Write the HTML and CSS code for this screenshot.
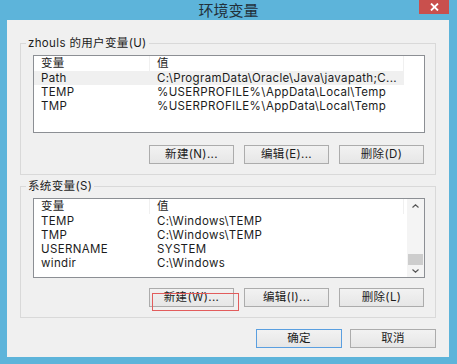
FILE: index.html
```html
<!DOCTYPE html>
<html lang="zh-CN">
<head>
<meta charset="utf-8">
<title>环境变量</title>
<link rel="stylesheet" href="styles.css">
</head>
<body>
<div class="window">
  <div class="titlebar">
    <div class="title">环境变量</div>
    <div class="close">
      <svg width="9" height="8" viewBox="0 0 9 8"><path d="M1 0.5 L8 7.5 M8 0.5 L1 7.5" stroke="#fff" stroke-width="1.8" fill="none"/></svg>
    </div>
  </div>
  <div class="client">
    <fieldset class="group">
      <legend>zhouls 的用户变量(U)</legend>
      <div class="list list-user">
        <div class="table">
          <div class="row head"><span class="c1">变量</span><span class="c2">值</span></div>
          <div class="row sel"><span class="c1">Path</span><span class="c2">C:\ProgramData\Oracle\Java\javapath;C...</span></div>
          <div class="row"><span class="c1">TEMP</span><span class="c2">%USERPROFILE%\AppData\Local\Temp</span></div>
          <div class="row"><span class="c1">TMP</span><span class="c2">%USERPROFILE%\AppData\Local\Temp</span></div>
        </div>
      </div>
      <div class="btns">
        <button class="btn">新建(N)...</button>
        <button class="btn">编辑(E)...</button>
        <button class="btn">删除(D)</button>
      </div>
    </fieldset>
    <fieldset class="group group-sys">
      <legend>系统变量(S)</legend>
      <div class="list list-sys">
        <div class="table">
          <div class="row head"><span class="c1">变量</span><span class="c2">值</span></div>
          <div class="row"><span class="c1">TEMP</span><span class="c2">C:\Windows\TEMP</span></div>
          <div class="row"><span class="c1">TMP</span><span class="c2">C:\Windows\TEMP</span></div>
          <div class="row"><span class="c1">USERNAME</span><span class="c2">SYSTEM</span></div>
          <div class="row"><span class="c1">windir</span><span class="c2">C:\Windows</span></div>
        </div>
        <div class="scrollbar">
          <div class="sb-btn sb-up">
            <svg width="7" height="4" viewBox="0 0 7 4"><path d="M0.5 3.5 L3.5 0.8 L6.5 3.5" stroke="#555" stroke-width="1.2" fill="none"/></svg>
          </div>
          <div class="sb-track"><div class="sb-thumb"></div></div>
          <div class="sb-btn sb-down">
            <svg width="7" height="4" viewBox="0 0 7 4"><path d="M0.5 0.5 L3.5 3.2 L6.5 0.5" stroke="#555" stroke-width="1.2" fill="none"/></svg>
          </div>
        </div>
      </div>
      <div class="btns">
        <button class="btn btn-marked">新建(W)...<span class="mark"></span></button>
        <button class="btn">编辑(I)...</button>
        <button class="btn">删除(L)</button>
      </div>
    </fieldset>
    <div class="dlg-btns">
      <button class="btn btn-default">确定</button>
      <button class="btn">取消</button>
    </div>
  </div>
</div>
</body>
</html>
```

FILE: styles.css
```css
html, body {
  margin: 0;
  padding: 0;
  background: #ffffff;
}

body {
  font-family: Inter, "Noto Sans CJK SC", sans-serif;
  font-size: 11.5px;
  letter-spacing: 0.35px;
  color: #1c1c1c;
}

.window {
  width: 457px;
  height: 364px;
  box-sizing: border-box;
  background: #5db4da;
  display: flex;
  flex-direction: column;
  padding-bottom: 7px;
}

.titlebar {
  height: 20px;
  flex: none;
  display: grid;
  grid-template-columns: 1fr auto 1fr;
}

.title {
  grid-column: 2;
  font-size: 15px;
  line-height: 20px;
  letter-spacing: 0;
  color: #22303a;
  font-family: "Noto Sans CJK SC", sans-serif;
}

.close {
  grid-column: 3;
  justify-self: end;
  width: 30px;
  height: 14px;
  margin-right: 8px;
  background: #c9504d;
  display: flex;
  align-items: center;
  justify-content: center;
}

.close svg {
  display: block;
}

.client {
  flex: 1;
  margin: 0 8px 0 7px;
  background: #f0f0f0;
  padding: 15px 13px 0 13px;
  display: flex;
  flex-direction: column;
}

.group {
  margin: 0;
  border: 1px solid #d9d9d9;
  padding: 4px 10px 10px 12px;
  min-width: 0;
}

.group-sys {
  margin-top: 3px;
}

.group legend {
  padding: 0 2px;
  margin-left: -7px;
  line-height: 16px;
  font-size: 11.5px;
}

.list {
  background: #ffffff;
  border: 1px solid #8c8f94;
  display: flex;
  overflow: hidden;
}

.list-user {
  height: 76px;
}

.list-sys {
  height: 78px;
}

.table {
  flex: 1;
  display: flex;
  flex-direction: column;
}

.row {
  display: flex;
  height: 14px;
  line-height: 14px;
  width: 370px;
  white-space: nowrap;
}

.row.head {
  height: 15px;
  line-height: 15px;
}

.head .c1,
.head .c2 {
  border-right: 1px solid #f0f0f0;
}

.c1 {
  box-sizing: border-box;
  width: 116px;
  padding-left: 7px;
}

.c2 {
  box-sizing: border-box;
  width: 254px;
  padding-left: 7px;
}

.sel {
  background: #f0f0f0;
}

.scrollbar {
  width: 17px;
  flex: none;
  background: #f4f4f4;
  display: flex;
  flex-direction: column;
}

.sb-btn {
  display: flex;
  align-items: center;
  justify-content: center;
}

.sb-up {
  height: 14px;
}

.sb-down {
  height: 12px;
}

.sb-track {
  flex: 1;
  display: flex;
  flex-direction: column;
  justify-content: flex-end;
  padding: 0 1px;
}

.sb-thumb {
  height: 11px;
  background: #cdcdcd;
}

.btns {
  display: flex;
  justify-content: flex-end;
  gap: 10px;
  padding-right: 1px;
  margin-top: 12px;
}

.group-sys .btns {
  margin-top: 10px;
}

.btn {
  width: 85px;
  height: 19px;
  padding: 0;
  margin: 0;
  box-sizing: border-box;
  border: 1px solid #acacac;
  background: linear-gradient(#f2f2f2, #e6e6e6);
  font-family: Inter, "Noto Sans CJK SC", sans-serif;
  font-size: 11.5px;
  letter-spacing: 0.35px;
  line-height: 17px;
  color: #1c1c1c;
  position: relative;
}

.mark {
  position: absolute;
  left: 2px;
  top: 4px;
  width: 87px;
  height: 18px;
  border: 1px solid #e25c5c;
  box-sizing: border-box;
}

.dlg-btns {
  display: flex;
  justify-content: flex-end;
  gap: 8px;
  margin-top: 11px;
}

.dlg-btns .btn {
  width: 86px;
}

.btn-default {
  border-color: #5a9fe0;
}
```
